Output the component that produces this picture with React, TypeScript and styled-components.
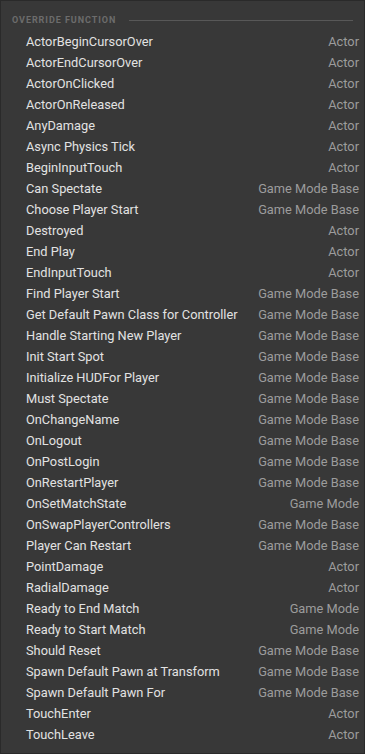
import styled, { createGlobalStyle } from 'styled-components'

const GlobalStyle = createGlobalStyle`
  html, body {
    margin: 0;
    padding: 0;
    background: #383838;
  }
  * { box-sizing: border-box; }
`

const Panel = styled.div`
  width: 365px;
  height: 754px;
  background-color: #383838;
  border: 1px solid #2a2a2a;
  font-family: Roboto, "Liberation Sans", sans-serif;
  padding: 9px 5px 0 11px;
`

const Header = styled.div`
  display: flex;
  align-items: center;
  gap: 13px;
  height: 20px;
`

const HeaderTitle = styled.span`
  font-size: 9px;
  font-weight: 700;
  letter-spacing: 0.95px;
  color: #6c6c6c;
  white-space: nowrap;
`

const HeaderRule = styled.div`
  flex: 1;
  height: 1px;
  background-color: #585858;
  margin-right: 6px;
`

const List = styled.div`
  display: flex;
  flex-direction: column;
  padding: 1px 0 0 14px;
`

const Row = styled.div`
  display: flex;
  justify-content: space-between;
  align-items: center;
  height: 21px;
  font-size: 12.8px;
`

const Name = styled.span`
  color: #e2e2e2;
`

const Category = styled.span`
  color: #9c9c9c;
`

const functions: [string, string][] = [
  ['ActorBeginCursorOver', 'Actor'],
  ['ActorEndCursorOver', 'Actor'],
  ['ActorOnClicked', 'Actor'],
  ['ActorOnReleased', 'Actor'],
  ['AnyDamage', 'Actor'],
  ['Async Physics Tick', 'Actor'],
  ['BeginInputTouch', 'Actor'],
  ['Can Spectate', 'Game Mode Base'],
  ['Choose Player Start', 'Game Mode Base'],
  ['Destroyed', 'Actor'],
  ['End Play', 'Actor'],
  ['EndInputTouch', 'Actor'],
  ['Find Player Start', 'Game Mode Base'],
  ['Get Default Pawn Class for Controller', 'Game Mode Base'],
  ['Handle Starting New Player', 'Game Mode Base'],
  ['Init Start Spot', 'Game Mode Base'],
  ['Initialize HUDFor Player', 'Game Mode Base'],
  ['Must Spectate', 'Game Mode Base'],
  ['OnChangeName', 'Game Mode Base'],
  ['OnLogout', 'Game Mode Base'],
  ['OnPostLogin', 'Game Mode Base'],
  ['OnRestartPlayer', 'Game Mode Base'],
  ['OnSetMatchState', 'Game Mode'],
  ['OnSwapPlayerControllers', 'Game Mode Base'],
  ['Player Can Restart', 'Game Mode Base'],
  ['PointDamage', 'Actor'],
  ['RadialDamage', 'Actor'],
  ['Ready to End Match', 'Game Mode'],
  ['Ready to Start Match', 'Game Mode'],
  ['Should Reset', 'Game Mode Base'],
  ['Spawn Default Pawn at Transform', 'Game Mode Base'],
  ['Spawn Default Pawn For', 'Game Mode Base'],
  ['TouchEnter', 'Actor'],
  ['TouchLeave', 'Actor'],
]

export default function App() {
  return (
    <>
      <GlobalStyle />
      <Panel>
        <Header>
          <HeaderTitle>OVERRIDE FUNCTION</HeaderTitle>
          <HeaderRule />
        </Header>
        <List>
          {functions.map(([name, category]) => (
            <Row key={name}>
              <Name>{name}</Name>
              <Category>{category}</Category>
            </Row>
          ))}
        </List>
      </Panel>
    </>
  )
}
